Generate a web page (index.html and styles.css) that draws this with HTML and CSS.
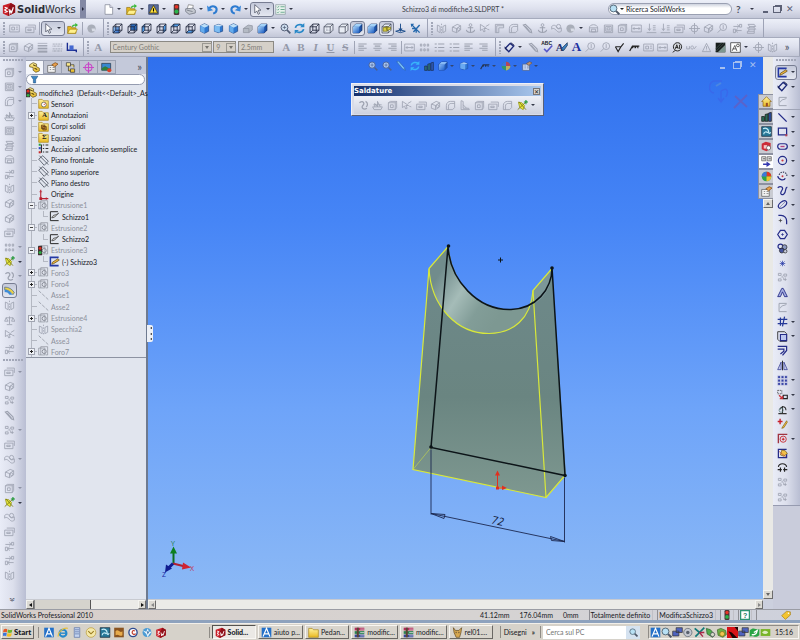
FILE: index.html
```html
<!DOCTYPE html>
<html lang="it">
<head>
    <meta charset="UTF-8">
    <meta name="viewport" content="width=device-width, initial-scale=1.0">
    <title>Schizzo3 di modifiche3.SLDPRT</title>
    <link rel="stylesheet" href="styles.css">
</head>
<body>

<!-- icon library -->
<svg class="defs" aria-hidden="true">
    <linearGradient id="blu" x1="0" y1="0" x2="1" y2="1"><stop offset="0" stop-color="#a8d4fa"/><stop offset="1" stop-color="#1c5cc0"/></linearGradient>
    <linearGradient id="yel" x1="0" y1="0" x2="0" y2="1"><stop offset="0" stop-color="#fff3a0"/><stop offset="1" stop-color="#e8b820"/></linearGradient>
    <symbol id="logo" viewBox="0 0 16 16"><path d="M1 4l9-3 5 3v8l-8 4-6-3z" fill="#c81e28"/><path d="M10 1l5 3v8l-8 4V7z" fill="#8f1018"/><path d="M3 6l3 1-3 2 3 2-3 1M8 8l1 5 1-3 1 2 2-6" fill="none" stroke="#fff" stroke-width="1.3"/></symbol>
    <symbol id="new" viewBox="0 0 16 16"><path d="M3 1h7l4 4v10H3z" fill="#fff" stroke="#7c8290"/><path d="M10 1v4h4" fill="#dde" stroke="#7c8290"/></symbol>
    <symbol id="open" viewBox="0 0 16 16"><path d="M1 5h5l1 2h6v8H1z" fill="#e8b820" stroke="#937414"/><path d="M4 9h11l-3 6H1z" fill="#fff08c" stroke="#a88714"/><path d="M7 5c1-3 3-3 5-3V0l4 3-4 3V4c-2 0-3 0-3 2z" fill="#38b838"/></symbol>
    <symbol id="warn" viewBox="0 0 16 16"><path d="M1 1h14v14H1z" fill="#5a6c9c" stroke="#28365e"/><path d="M8 2l6 11H2z" fill="#ffe03c" stroke="#443800"/><path d="M8 6v4M8 11v1" stroke="#000" stroke-width="1.6"/></symbol>
    <symbol id="traffic" viewBox="0 0 16 16"><rect x="4" y="0" width="8" height="16" rx="2" fill="#4c3534"/><circle cx="8" cy="4" r="2.7" fill="#e83428"/><circle cx="8" cy="11" r="3" fill="#2ab44c"/></symbol>
    <symbol id="print" viewBox="0 0 16 16"><path d="M5 1l7 1-1 6H3z" fill="#fff" stroke="#777"/><path d="M1 7l11-1 3 3v4l-9 2-5-4z" fill="#c4c8d0" stroke="#646a76"/><path d="M3 9l8 2" stroke="#646a76"/></symbol>
    <symbol id="undo" viewBox="0 0 16 16"><path d="M3 6c5-5 11-2 11 2 0 3-2 5-5 6" fill="none" stroke="#2d7bd0" stroke-width="3"/><path d="M0 2l1 9 8-2z" fill="#3988da"/></symbol>
    <symbol id="redo" viewBox="0 0 16 16"><path d="M13 6C8 1 2 4 2 8c0 3 2 5 5 6" fill="none" stroke="#2d7bd0" stroke-width="3"/><path d="M16 2l-1 9-8-2z" fill="#3988da"/></symbol>
    <symbol id="cursor" viewBox="0 0 16 16"><path d="M4 1v12l3-3 2 5 2-1-2-5h4z" fill="#fff" stroke="#3c4254"/></symbol>
    <symbol id="list" viewBox="0 0 16 16"><path d="M1 1h14v14H1z" fill="#e8f3ec" stroke="#8a9aa0"/><path d="M3 4l1 1 2-2M3 8l1 1 2-2M3 12l1 1 2-2M8 4h6M8 8h6M8 12h6" fill="none" stroke="#388c6c"/></symbol>
    <symbol id="glass" viewBox="0 0 16 16"><path d="M10 10l5 5" stroke="#4e5868" stroke-width="3"/><circle cx="6.500" cy="6.500" r="5" fill="#b8e0f4" stroke="#546878" stroke-width="1.400"/></symbol>
    <symbol id="zoomfit" viewBox="0 0 16 16"><path d="M10 10l5 5" stroke="#525c74" stroke-width="2.400"/><circle cx="6.500" cy="6.500" r="5" fill="#cfe0f0" stroke="#525c74" stroke-width="1.400"/><path d="M4 6.500h5M6.500 4v5" stroke="#525c74"/></symbol>
    <symbol id="rot" viewBox="0 0 16 16"><path d="M2 7c1-5 8-6 11-3M14 9c-1 5-8 6-11 3" fill="none" stroke="#2888c8" stroke-width="2.400"/><path d="M15 0v6h-6zM1 16v-6h6z" fill="#2888c8"/></symbol>

    <!-- view cubes -->
    <symbol id="wire" viewBox="0 0 16 16"><path d="M1.500 5.500h9v9h-9zM5.500 1.500h9v9h-9zM1.500 5.500l4-4M10.500 5.500l4-4M1.500 14.500l4-4M10.500 14.500l4-4" fill="none" stroke="#20263a" stroke-width="1.200"/></symbol>
    <symbol id="vfront" viewBox="0 0 16 16"><path d="M1.500 5.500h9v9h-9z" fill="url(#blu)"/><use href="#wire"/></symbol>
    <symbol id="vback" viewBox="0 0 16 16"><path d="M5.500 1.500h9v9h-9z" fill="#2b6ab8"/><use href="#wire"/></symbol>
    <symbol id="vleft" viewBox="0 0 16 16"><path d="M1.500 5.500l4-4v9l-4 4z" fill="#4f9ae4"/><use href="#wire"/></symbol>
    <symbol id="vright" viewBox="0 0 16 16"><path d="M10.500 5.500l4-4v9l-4 4z" fill="#4f9ae4"/><use href="#wire"/></symbol>
    <symbol id="vtop" viewBox="0 0 16 16"><path d="M1.500 5.500l4-4h9l-4 4z" fill="#4f9ae4"/><use href="#wire"/></symbol>
    <symbol id="vbottom" viewBox="0 0 16 16"><path d="M1.500 14.500l4-4h9l-4 4z" fill="#4f9ae4"/><use href="#wire"/></symbol>
    <symbol id="iso" viewBox="0 0 16 16"><path d="M8 1l6 3v8l-6 3-6-3V4z" fill="#2e78d0" stroke="#1c4484"/><path d="M8 1l6 3-6 3-6-3z" fill="#bcdff8"/><path d="M2 4l6 3v8l-6-3z" fill="#66acec"/></symbol>
    <symbol id="iso2" viewBox="0 0 16 16"><path d="M2 4l6-2 6 2v8l-6 2-6-2z" fill="#2e78d0" stroke="#1c4484"/><path d="M2 4l8 1v9l-8-2z" fill="#7cbcf2"/><path d="M2 4l6-2 6 2-4 1z" fill="#cde8fb"/></symbol>
    <symbol id="isog" viewBox="0 0 16 16"><path d="M2 8l7-5 6 1v6l-5 4H2z" fill="#b4bac4" stroke="#8c929e"/><path d="M2 8h8v6" fill="none" stroke="#8c929e"/></symbol>
    <symbol id="solid" viewBox="0 0 16 16"><path d="M1.500 5.500l4-4h9v9l-4 4h-9z" fill="#1c52a8" stroke="#162c5c"/><path d="M1.500 5.500h9v9h-9z" fill="url(#blu)"/><path d="M1.500 5.500l4-4h9l-4 4z" fill="#a4d2f8"/></symbol>
    <symbol id="hid" viewBox="0 0 16 16"><path d="M1.500 5.500l4-4h9v9l-4 4h-9zM1.500 5.500h9v9M10.500 5.500l4-4" fill="#e8ecf4" stroke="#343a4c"/></symbol>
    <symbol id="hidg" viewBox="0 0 16 16"><use href="#hid"/><path d="M5.500 2v8.500h9M5.500 10.500l-4 4" fill="none" stroke="#9298a8" stroke-dasharray="2 1"/></symbol>
    <symbol id="sect" viewBox="0 0 16 16"><use href="#hid"/><path d="M3 7l6-2v7H3zM7 6h7v3l-5 2z" fill="#d8cc40" stroke="#6c6618"/></symbol>
    <symbol id="norm" viewBox="0 0 16 16"><path d="M8 1v10M1 12l7 2 7-2-7-2z" fill="none" stroke="#1e4f8c" stroke-width="1.400"/><path d="M8 13l-3-5h6z" fill="#1e4f8c"/></symbol>
    <symbol id="star" viewBox="0 0 16 16"><path d="M2 2l12 12M14 3L5 13M3 8h6v6" fill="none" stroke="#2468ac" stroke-width="2"/><path d="M1 1h5L2 6z" fill="#2468ac"/></symbol>
    <symbol id="brush" viewBox="0 0 16 16"><path d="M1 1l9 11 5 3-2-5L4 0z" fill="#8cd4f8" stroke="#2c5c94"/></symbol>

    <!-- greyed commands -->
    <symbol id="g-box" viewBox="0 0 16 16"><path d="M2 4l3-2h9v9l-2 3H2zM2 4h10v10M12 4l2-2M5 7h4v4H5z"/></symbol>
    <symbol id="g-cyl" viewBox="0 0 16 16"><path d="M2 6l7-4 5 2v6l-6 4-6-2zM2 6l6 2 6-4M8 8v6"/><circle cx="11" cy="9" r="2"/></symbol>
    <symbol id="g-fillet" viewBox="0 0 16 16"><path d="M2 14V8c0-4 3-6 6-6h6v9l-3 3zM5 14V9c0-3 2-4 4-4h5"/></symbol>
    <symbol id="g-rib" viewBox="0 0 16 16"><path d="M1 10h14l-2 4H3zM4 10V5l4 5V2l4 8M2 7h12"/></symbol>
    <symbol id="g-shell" viewBox="0 0 16 16"><path d="M2 3h12v11H2zM4 5h8v7H4zM6 7h4v3H6z"/></symbol>
    <symbol id="g-stack" viewBox="0 0 16 16"><path d="M3 2h9l2 3H5zM2 7h10l2 2H4zM2 12h10v3H2zM5 5v2M12 5v2M4 9v3M12 9v3"/></symbol>
    <symbol id="g-dome" viewBox="0 0 16 16"><path d="M2 7c0-6 12-6 12 0v6H2zM2 7h12M5 9h6v4H5z"/></symbol>
    <symbol id="g-swap" viewBox="0 0 16 16"><path d="M2 5h8l-2-3M10 5L8 7M14 11H6l2-3M6 11l2 3M11 2h3v4h-3zM2 9h3v5H2z"/></symbol>
    <symbol id="g-mir" viewBox="0 0 16 16"><path d="M2 3l4 2v9l-4-2zM14 3l-4 2v9l4-2zM8 1v2M8 5v2M8 9v2M8 13v2"/></symbol>
    <symbol id="g-pat" viewBox="0 0 16 16"><path d="M2 3h2v3H2zM7 3h2v3H7zM12 3h2v3h-2zM2 10h2v3H2zM7 10h2v3H7zM12 10h2v3h-2z"/></symbol>
    <symbol id="g-curve" viewBox="0 0 16 16"><path d="M2 4c6-4 8 1 5 4s1 7 6 4M11 2c4 2 3 6 1 8" stroke-width="1.800"/></symbol>
    <symbol id="g-bal" viewBox="0 0 16 16"><path d="M8 2v11M3 4h10M3 4l-2 5h5L3 4M13 4l-2 5h5l-3-5M4 14h8"/></symbol>
    <symbol id="g-arrow" viewBox="0 0 16 16"><path d="M2 2v9l3-2 2 4 2-1-2-4h4zM10 5l5-3M12 9l3 1"/></symbol>
    <symbol id="g-dots" viewBox="0 0 16 16"><path d="M2 2h4v3H2zM10 3h4v3h-4zM2 10h4v3H2zM9 11h5M8 7l2 3M6 8l3-3M12 8v5"/></symbol>
    <symbol id="g-pencil" viewBox="0 0 16 16"><path d="M2 3l9 10 3 1-1-4L5 2zM5 5l6 7" stroke-width="1.600"/></symbol>
    <symbol id="g-pipe" viewBox="0 0 16 16"><path d="M1 5c4-4 7 0 8 2s3 2 6 0v5c-4 3-6 0-8-2S3 7 1 9z"/><circle cx="11" cy="5" r="3"/></symbol>
    <symbol id="g-blob" viewBox="0 0 16 16"><circle cx="8" cy="8" r="6" fill="#a9aeb9"/><path d="M8 8h5v4H9z" fill="#d8dce6"/></symbol>
    <symbol id="g-anchor" viewBox="0 0 16 16"><circle cx="8" cy="3" r="2"/><path d="M8 5v9M4 7h8M2 10c1 5 11 5 12 0" stroke-width="1.600"/></symbol>
    <symbol id="g-plate" viewBox="0 0 16 16"><path d="M1 6h12v8H1zM4 3h11v7M4 9h5v2H4z"/></symbol>
    <symbol id="g-down" viewBox="0 0 16 16"><path d="M1 14h14M5 1v9M3 8l2 3 2-3M10 4h4M10 7h4M10 10h4"/></symbol>
    <symbol id="g-corner" viewBox="0 0 16 16"><path d="M2 14V2h12v5H7v7zM4 14V4h10"/></symbol>
    <symbol id="g-tri" viewBox="0 0 16 16"><path d="M8 2l6 12H2zM8 6v4M8 11v1"/></symbol>
    <symbol id="g-angle" viewBox="0 0 16 16"><path d="M3 1v13h12l-1-2H6V2zM6 7l5 5"/></symbol>
    <symbol id="g-ball" viewBox="0 0 16 16"><circle cx="9" cy="6" r="5"/><path d="M9 3v6M5 10l-4 4"/></symbol>
    <symbol id="g-tag" viewBox="0 0 16 16"><path d="M1 3h14v10H1zM4 6h4v4H4zM10 6h3M10 9h3"/></symbol>
    <symbol id="g-slot" viewBox="0 0 16 16"><path d="M1 6v4h4V6M7 8c0-3 4-3 4 0s-4 3-4 0M12 10l3-4"/></symbol>
    <symbol id="g-target" viewBox="0 0 16 16"><circle cx="8" cy="8" r="5"/><path d="M8 0v16M0 8h16"/></symbol>
    <symbol id="g-left" viewBox="0 0 16 16"><path d="M2 3h12M2 6h8M2 9h12M2 12h8" stroke-width="1.600"/></symbol>
    <symbol id="g-mid" viewBox="0 0 16 16"><path d="M2 3h12M4 6h8M2 9h12M4 12h8" stroke-width="1.600"/></symbol>
    <symbol id="g-right" viewBox="0 0 16 16"><path d="M2 3h12M6 6h8M2 9h12M6 12h8" stroke-width="1.600"/></symbol>
    <symbol id="g-bul" viewBox="0 0 16 16"><path d="M1 3h3M1 8h3M1 13h3M6 3h9M6 8h9M6 13h9" stroke-width="1.600"/></symbol>
    <symbol id="g-fit" viewBox="0 0 16 16"><path d="M1 3h14v10H1zM3 8h10M5 6L3 8l2 2M11 6l2 2-2 2"/></symbol>
    <symbol id="g-lines" viewBox="0 0 16 16"><path d="M1 2h14" stroke-width="1"/><path d="M1 5.500h14" stroke-width="2"/><path d="M1 9.500h14" stroke-width="2.500"/><path d="M1 14h14" stroke-width="3"/></symbol>
    <symbol id="g-dash" viewBox="0 0 16 16"><path d="M1 3h14M1 10h14" stroke-dasharray="3 1"/><path d="M1 6h14M1 13h14" stroke-dasharray="1 1" stroke-width="2"/></symbol>
    <symbol id="g-sk" viewBox="0 0 16 16"><path d="M14 2H3v12h11M5 9c1-5 6-3 9-6" stroke-width="1.400"/></symbol>

    <!-- coloured commands -->
    <symbol id="edgec" viewBox="0 0 16 16"><path d="M2 1v11h13v3" fill="none" stroke="#1a2c90" stroke-width="2"/><path d="M5 5h6v7H5z" fill="#4468d0"/></symbol>
    <symbol id="dim" viewBox="0 0 16 16"><path d="M2 9l7-7 5 4-7 8z" fill="none" stroke="#1c2878" stroke-width="2"/><path d="M1 7l3 5M10 1l5 4" stroke="#101848" stroke-width="1.300"/></symbol>
    <symbol id="check" viewBox="0 0 16 16"><path d="M3 10l4 4 8-9" fill="none" stroke="#5858c8" stroke-width="2.200"/></symbol>
    <symbol id="fmt" viewBox="0 0 16 16"><path d="M15 1L7 9v3h3l5-7z" fill="#3c80c0" stroke="#1c3454"/></symbol>
    <symbol id="rough" viewBox="0 0 16 16"><path d="M2 7h8L6 14 2 7M10 7l4-5M6 14" fill="none" stroke="#222" stroke-width="1.600"/></symbol>
    <symbol id="weld" viewBox="0 0 16 16"><path d="M1 13L5 6h10M5 9c1-4 4-4 4 0 1-4 4-4 4 0" fill="none" stroke="#222" stroke-width="1.800"/></symbol>
    <symbol id="datum" viewBox="0 0 16 16"><circle cx="8" cy="7" r="6" fill="#d7dae0" stroke="#222" stroke-width="1.400"/><path d="M5 10l2-6 2 6M5 8h4M11 4v6M5 12l-4 3" fill="none" stroke="#222" stroke-width="1.300"/></symbol>
    <symbol id="hatch" viewBox="0 0 16 16"><path d="M1 1h14v14H1z" fill="#171c1c"/><path d="M4 15L15 4v11z" fill="#7d9690"/><path d="M1 10l9-9M1 14L14 1" stroke="#47605a"/></symbol>
    <symbol id="block" viewBox="0 0 16 16"><path d="M1 1h14v14H1z" fill="#fff" stroke="#222"/><path d="M3 13l4-8 3 8M4 10h5" fill="none" stroke="#222"/><circle cx="11.500" cy="5" r="2" fill="none" stroke="#222"/></symbol>
    <symbol id="refgeo" viewBox="0 0 16 16"><path d="M2 3l5 1 4 4-2 6-5-3z" fill="#e8e83c" stroke="#8c8c10"/><path d="M1 14L14 2M3 3l10 11" stroke="#7c7c14" stroke-width="1.300"/><path d="M13 0v6M10 3h6" stroke="#1a9838" stroke-width="1.600"/></symbol>
    <symbol id="inst3d" viewBox="0 0 16 16"><path d="M1 3c6 0 11 3 14 8l-2 3C9 9 5 7 1 7z" fill="#e9d24a" stroke="#47658c"/><path d="M1 7c5 0 8 3 11 7H8C6 11 4 10 1 10z" fill="#3c8cd8"/></symbol>
    <symbol id="sketch" viewBox="0 0 16 16"><path d="M14 2H2v12h12" fill="none" stroke="#2438a4" stroke-width="2.200"/><path d="M5 9l8-5 2 2-8 5-3 1z" fill="#f0b83c" stroke="#564018"/></symbol>
    <symbol id="line" viewBox="0 0 16 16"><path d="M2 2l12 12" stroke="#252c88" stroke-width="2"/></symbol>
    <symbol id="rect" viewBox="0 0 16 16"><path d="M2 3h12v10H2z" class="ink"/><path d="M12 12h3v3h-3z" fill="#b44454"/></symbol>
    <symbol id="slot" viewBox="0 0 16 16"><rect x="1" y="4" width="14" height="8" rx="4" class="ink"/><path d="M5 8h6" stroke="#b44480" stroke-width="2"/></symbol>
    <symbol id="circ" viewBox="0 0 16 16"><circle cx="8" cy="8" r="6" class="ink"/><circle cx="8" cy="8" r="1.600" fill="#c8343c"/></symbol>
    <symbol id="arc" viewBox="0 0 16 16"><path d="M3 7c3-7 13-4 11 3" fill="none" stroke="#303450" stroke-width="1.700" stroke-dasharray="2 1.500"/><path d="M1 9c2 7 10 6 11 3" class="ink"/><circle cx="8" cy="9" r="1.400" fill="#c8343c"/></symbol>
    <symbol id="spline" viewBox="0 0 16 16"><path d="M1 4c5-4 9 0 6 4s-1 8 3 5 1-9 5-10" class="ink"/></symbol>
    <symbol id="ell" viewBox="0 0 16 16"><ellipse cx="8" cy="8" rx="7" ry="4" transform="rotate(-40 8 8)" class="ink"/><path d="M4 12l8-8" stroke="#777ba4"/></symbol>
    <symbol id="filletc" viewBox="0 0 16 16"><path d="M2 2h4c5 0 8 4 8 8v5" class="ink"/><path d="M5 7v5M2.500 9.500h5" stroke="#333"/></symbol>
    <symbol id="poly" viewBox="0 0 16 16"><path d="M5 2h6l4 6-4 6H5L1 8z" class="ink"/><path d="M6 8h4M8 6v4" stroke="#252c88"/></symbol>
    <symbol id="balls" viewBox="0 0 16 16"><circle cx="5" cy="5" r="3.500" class="ink"/><circle cx="11" cy="6" r="3.500" fill="#8c98c0" stroke="#222"/><circle cx="7" cy="11" r="3.500" fill="#4654a0" stroke="#222"/><circle cx="12" cy="12" r="2.500" fill="#c8cce0" stroke="#222"/></symbol>
    <symbol id="pt" viewBox="0 0 16 16"><path d="M8 4v8M4 8h8M5 5l6 6M11 5l-6 6" stroke="#2438a4"/></symbol>
    <symbol id="txt" viewBox="0 0 16 16"><path d="M1 14L7 2h2l6 12h-4l-3-7-3 7z" fill="#a8b0e0" stroke="#252c88" stroke-width="1.300"/></symbol>
    <symbol id="trim" viewBox="0 0 16 16"><path d="M1 5h14M1 11h14M5 2v12M11 1L8 15" stroke="#243898" stroke-width="1.800"/></symbol>
    <symbol id="conv" viewBox="0 0 16 16"><path d="M1 1h10l3 3v11H4l-3-3z" fill="#dfe3f2" stroke="#333" stroke-width="1.300"/><path d="M5 5h9v9H5z" fill="#bcc6f0" stroke="#252c88" stroke-width="1.600"/></symbol>
    <symbol id="off" viewBox="0 0 16 16"><path d="M1 2h13v6l-6 7M1 6h9v3l-5 4" class="ink"/></symbol>
    <symbol id="mirr" viewBox="0 0 16 16"><path d="M6 3L1 14h5zM10 3l5 11h-5z" fill="#c6ccec" stroke="#252c88"/><path d="M8 1v14" stroke="#222" stroke-width="1.400"/></symbol>
    <symbol id="patt" viewBox="0 0 16 16"><path d="M1 1h4v4H1zM6 1h4v4H6zM11 1h4v4h-4zM1 6h4v4H1zM6 6h4v4H6zM11 6h4v4h-4zM1 11h4v4H1zM6 11h4v4H6zM11 11h4v4h-4z" fill="#3440a4" stroke="#dfe2ee" stroke-width=".8"/></symbol>
    <symbol id="move" viewBox="0 0 16 16"><path d="M1 2h6v5H1z" fill="none" stroke="#333" stroke-dasharray="2 1"/><path d="M9 9h6v5H9z" fill="none" stroke="#222" stroke-width="1.600"/><path d="M3 9l5 5M8 10v4H4" stroke="#c8343c" stroke-width="2" fill="none"/></symbol>
    <symbol id="rel" viewBox="0 0 16 16"><path d="M2 14h12M8 3v11M4 8c3-7 9-4 9 1" fill="none" stroke="#333" stroke-width="1.500"/><circle cx="6" cy="9" r="3" fill="none" stroke="#577"/></symbol>
    <symbol id="fix" viewBox="0 0 16 16"><path d="M1 5h7M4.500 1v8" stroke="#c81e28" stroke-width="2"/><path d="M14 4l-6 9-1 2 3-1 5-8z" fill="#f2c040" stroke="#806018"/></symbol>
    <symbol id="snap" viewBox="0 0 16 16"><path d="M2 15V2h13" fill="none" stroke="#a03440" stroke-width="2"/><circle cx="9" cy="9" r="4.500" fill="none" stroke="#c8343c" stroke-width="1.400"/><path d="M9 7v4M7 9h4" stroke="#c81e28" stroke-width="1.500"/></symbol>
    <symbol id="rapid" viewBox="0 0 16 16"><path d="M2 1v13h12V8M2 2h12" class="ink"/><path d="M7 3l5 1 3 4-5 4-5-2z" fill="#f0c048" stroke="#705418"/><path d="M3 5l10 8" stroke="#c84c38"/></symbol>
    <symbol id="conn" viewBox="0 0 16 16"><path d="M2 7c1-6 11-6 12 0M1 11h6M9 11h6M5 8v6M11 8v6" fill="none" stroke="#222" stroke-width="1.700"/></symbol>

    <!-- feature tree -->
    <symbol id="part" viewBox="0 0 16 16"><path d="M1 4l5-3 5 2v4l4 2v4l-5 2-4-3V8L1 7z" fill="url(#yel)" stroke="#5c4810"/><path d="M6 4l4 2M8 9l4 2" stroke="#5c4810" stroke-width="1.600"/></symbol>
    <symbol id="root" viewBox="0 0 16 16"><use href="#part"/><rect x="0" y="3" width="6" height="12" rx="1" fill="#403030"/><circle cx="3" cy="6" r="2" fill="#e02c20"/><circle cx="3" cy="12" r="2" fill="#2cae44"/></symbol>
    <symbol id="fold" viewBox="0 0 16 16"><path d="M1 2h5l2 2h7v11H1z" fill="url(#yel)" stroke="#a8841c"/></symbol>
    <symbol id="f-sens" viewBox="0 0 16 16"><use href="#fold"/><circle cx="8.500" cy="9.500" r="3.500" fill="#fff" stroke="#555"/><path d="M8.500 10l2-2" stroke="#c22" stroke-width="1.400"/></symbol>
    <symbol id="f-body" viewBox="0 0 16 16"><use href="#fold"/><path d="M5 6h5v5H5zM7 8h5v5H7z" fill="#c88c38" stroke="#553410"/></symbol>
    <symbol id="mat" viewBox="0 0 16 16"><path d="M1 1h3v3H1z" fill="#28a040"/><path d="M1 6h3v3H1z" fill="#2848c0"/><path d="M1 12h3v3H1z" fill="#c82828"/><path d="M5 2v12M7 3h2M11 3h4M7 8h2M11 8h4M7 13h2M11 13h4" stroke="#333" stroke-width="1.600"/></symbol>
    <symbol id="plane" viewBox="0 0 16 16"><path d="M1 6l6-5 8 8-6 6zM2 1l13 13" fill="none" stroke="#4d5360" stroke-width="1.200"/></symbol>
    <symbol id="orig" viewBox="0 0 16 16"><path d="M4 1v13h11" fill="none" stroke="#b82030" stroke-width="1.600"/><path d="M2 4h4M12 12v4" stroke="#b82030"/><path d="M2 12h4v4H2z" fill="#b82030"/></symbol>
    <symbol id="skt" viewBox="0 0 16 16"><path d="M13 1H2v13h12" fill="none" stroke="#222" stroke-width="1.400"/><path d="M4 10c2-6 6-3 10-7L8 9z" fill="#ccc" stroke="#333"/></symbol>
    <symbol id="axis" viewBox="0 0 16 16"><path d="M1 1l14 13" stroke="#858994" stroke-dasharray="5 2"/></symbol>
    <symbol id="feat" viewBox="0 0 16 16"><path d="M1 3h9v10H1zM4 1h10v12h-3M4 1v12" fill="none" stroke="#8b8f99"/><circle cx="9" cy="8" r="3" fill="none" stroke="#8b8f99" stroke-width="1.400"/></symbol>
    <symbol id="featr" viewBox="0 0 16 16"><use href="#feat"/><rect x="0" y="1" width="6" height="14" rx="1" fill="#403030"/><circle cx="3" cy="5" r="2" fill="#e02c20"/><circle cx="3" cy="11" r="2.200" fill="#2cae44"/></symbol>
    <symbol id="funnel" viewBox="0 0 16 16"><path d="M2 2h12l-4 6v6H6V8z" fill="#3c88c4" stroke="#1c4c80"/></symbol>
    <symbol id="props" viewBox="0 0 16 16"><path d="M1 5h11v10H1z" fill="#f4f4f4" stroke="#555"/><path d="M4 8h2M8 8h3M4 11h2M8 11h3" stroke="#666"/><path d="M7 4l5-3 4 2-5 4z" fill="#e8a04c" stroke="#80480c"/></symbol>
    <symbol id="config" viewBox="0 0 16 16"><path d="M2 1h6v5H2zM8 4h5v4M5 6v7h3M8 10h6v5H8z" fill="url(#yel)" stroke="#333"/></symbol>
    <symbol id="dimx" viewBox="0 0 16 16"><circle cx="8" cy="8" r="5" fill="none" stroke="#c848c8" stroke-width="1.600"/><path d="M8 0v16M0 8h16" stroke="#c848c8" stroke-width="1.600"/></symbol>
    <symbol id="disp" viewBox="0 0 16 16"><path d="M1 2h13v10H1z" fill="#3888d0" stroke="#234"/><path d="M1 9l5-3 8 4v2H1z" fill="#30803c"/><circle cx="12" cy="12" r="3" fill="#d8402c"/></symbol>

    <!-- task pane and desktop -->
    <symbol id="home" viewBox="0 0 16 16"><path d="M1 8l7-7 7 7h-2v7H3V8z" fill="url(#yel)" stroke="#906414"/><path d="M7 10h3v5H7z" fill="#9c4c20"/></symbol>
    <symbol id="books" viewBox="0 0 16 16"><path d="M1 8h4v7H1zM6 5l4-1v11H6z" fill="#2c6c54" stroke="#111"/><path d="M11 3l4-1v13h-4z" fill="#2d50a0" stroke="#111"/></symbol>
    <symbol id="expl" viewBox="0 0 16 16"><path d="M1 1h14v14H1z" fill="#287898" stroke="#123"/><path d="M3 4c4-2 8 0 8 4s2 3 3 1M4 12c0-4 4-4 6-2" fill="none" stroke="#c6ecf8" stroke-width="1.800"/></symbol>
    <symbol id="redbox" viewBox="0 0 16 16"><path d="M1 4l6-3 7 2v8l-6 4-7-3z" fill="#cc2c38"/><path d="M4 6h5v5H4z" fill="#f8c4c4"/><circle cx="11" cy="10" r="3" fill="#fff" stroke="#555"/></symbol>
    <symbol id="pal" viewBox="0 0 16 16"><path d="M1 1h6v6H1zM9 1h6v6H9z" fill="#ddd" stroke="#555"/><path d="M3 4h3M11 4h3" stroke="#333"/><path d="M3 11h5V8l6 4-6 4v-3H3z" fill="#3438b0"/></symbol>
    <symbol id="pie" viewBox="0 0 16 16"><circle cx="8" cy="8" r="7" fill="#2ca448"/><path d="M8 8V1a7 7 0 0 1 7 7z" fill="#e03828"/><path d="M8 8H1a7 7 0 0 1 7-7z" fill="#3c78dc"/><path d="M8 8h7a7 7 0 0 1-7 7z" fill="#ecc430"/></symbol>
    <symbol id="win" viewBox="0 0 16 16"><path d="M1 3c3-2 5-1 6 0L6 8c-2-1-3-1-6 0z" fill="#e85a28"/><path d="M8 3c3 2 5 1 7 0l-1 5c-3 1-4 1-7 0z" fill="#6cb42c"/><path d="M0 9c3-1 4-1 6 0l-1 5c-2-1-3-1-6 0z" fill="#3c74d8"/><path d="M7 9c3 1 4 1 7 0l-1 5c-3 1-4 1-7 0z" fill="#f4c020"/></symbol>
    <symbol id="blueA" viewBox="0 0 16 16"><path d="M1 1h14v14H1z" fill="#2470c8"/><path d="M3 14L8 2l5 12M5 10h7" fill="none" stroke="#fff" stroke-width="1.800"/></symbol>
    <symbol id="ie" viewBox="0 0 16 16"><circle cx="8" cy="9" r="5" fill="none" stroke="#2488cc" stroke-width="3"/><path d="M4 9h9" stroke="#2488cc" stroke-width="2"/><path d="M1 14C0 8 9 0 15 2" fill="none" stroke="#e6c040" stroke-width="1.600"/></symbol>
    <symbol id="bird" viewBox="0 0 16 16"><circle cx="8" cy="8" r="6.500" fill="#4c9cd4"/><path d="M2 5l5 2 2-5 2 5 4 0-4 4-2 4-2-5z" fill="#e8f4fc"/><path d="M8 6l3 1-2 4z" fill="#1c5c9c"/></symbol>
    <symbol id="srv" viewBox="0 0 16 16"><path d="M4 1h8v14H4z" fill="#c4d4f0" stroke="#5870a4"/><path d="M5 4h6M5 7h6M5 10h6" stroke="#5870a4"/></symbol>
    <symbol id="mail" viewBox="0 0 16 16"><circle cx="8" cy="8" r="7" fill="#f4e8a8" stroke="#ba9a38"/><path d="M4 6l4 4 4-4" fill="none" stroke="#98781c" stroke-width="1.500"/></symbol>
    <symbol id="app" viewBox="0 0 16 16"><path d="M1 1h14v14H1z" fill="#8a5420"/><path d="M3 6c4-4 6 4 10 0v6c-4 3-6-3-10 0z" fill="#e8ac4c"/></symbol>
    <symbol id="cc" viewBox="0 0 16 16"><circle cx="8" cy="8" r="6" fill="#fff" stroke="#304c90" stroke-width="2"/><path d="M11 6c-4-3-6 3-2 5l3-1" fill="none" stroke="#c04030" stroke-width="1.600"/></symbol>
    <symbol id="rar" viewBox="0 0 16 16"><path d="M1 1h14v4H1z" fill="#b42c5c"/><path d="M1 6h14v4H1z" fill="#2c8454"/><path d="M1 11h14v4H1z" fill="#3448a0"/><path d="M4 1h3v14H4z" fill="#5c4434"/><path d="M9 3h6M9 8h6M9 13h6" stroke="#e4e4e4"/></symbol>
    <symbol id="dog" viewBox="0 0 16 16"><path d="M2 1l3 4h5l4-4-1 7-2 7H6L3 8z" fill="#d8a850" stroke="#60481c"/><path d="M6 7v2M10 7v2" stroke="#222"/></symbol>
    <symbol id="pcs" viewBox="0 0 16 16"><path d="M6 1h9v7H6zM1 6h9v7H1z" fill="#5064c0" stroke="#333"/></symbol>
    <symbol id="vol" viewBox="0 0 16 16"><circle cx="7" cy="8" r="6" fill="#c4c8d0" stroke="#58606c"/><circle cx="7" cy="8" r="2.500" fill="#58606c"/></symbol>
    <symbol id="burst" viewBox="0 0 16 16"><path d="M8 8L1 2M8 8L2 14M8 8l7-7" stroke="#107878" stroke-width="2.500"/><path d="M8 8h7M8 8l5 6" stroke="#a82848" stroke-width="2"/></symbol>
    <symbol id="green" viewBox="0 0 16 16"><path d="M2 2l6 2 6 7-3 4-8-5z" fill="#50ac4c" stroke="#286028"/><circle cx="11" cy="11" r="3" fill="#d4dcc8" stroke="#445"/></symbol>
    <symbol id="chat" viewBox="0 0 16 16"><path d="M2 4l5-2 7 3 1 6-5 4-7-3z" fill="#6cb048" stroke="#3c6820"/><circle cx="9" cy="10" r="3.500" fill="#f0c850" stroke="#8a6a18"/></symbol>
    <symbol id="redsq" viewBox="0 0 16 16"><path d="M0 0h16v16H0z" fill="#d81418"/><path d="M2 6l5 2 8 8H8zM11 0h5v6z" fill="#200404"/></symbol>
    <symbol id="msn" viewBox="0 0 16 16"><path d="M1 5c6-6 9 0 14-2v9c-6 5-8 0-14 2z" fill="#28a444"/><path d="M4 11c6 1 7-2 8-6l-5 3" fill="none" stroke="#fff" stroke-width="2"/></symbol>
    <symbol id="nv" viewBox="0 0 16 16"><path d="M1 3h14v10H1z" fill="#78b428"/><path d="M3 8c3-4 7-3 9 0-3 3-6 3-9 0z" fill="#dcecc0"/></symbol>
    <symbol id="tag" viewBox="0 0 16 16"><path d="M1 9l8-7 6 1v5l-8 7z" fill="#f4c430" stroke="#a47c10"/><circle cx="12" cy="5" r="1.200" fill="#fff"/></symbol>
    <symbol id="help" viewBox="0 0 16 16"><path d="M1 1h14v14H1z" fill="#fff" stroke="#2c9470" stroke-width="2"/></symbol>
</svg>

<div class="app">
    <header class="bar titlebar">
        <div class="brand"><svg><use href="#logo"/></svg><b>Solid</b>Works</div>
        <button class="flyout" title="Menu"></button>
        <div class="group g-file">
            <button class="b dd" title="Nuovo"><svg><use href="#new"/></svg></button>
            <button class="b dd" title="Apri"><svg><use href="#open"/></svg></button>
            <button class="b dd" title="Salva"><svg><use href="#warn"/></svg></button>
            <button class="b" title="Ricostruisci"><svg><use href="#traffic"/></svg></button>
            <button class="b dd" title="Stampa"><svg><use href="#print"/></svg></button>
            <button class="b dd" title="Annulla"><svg><use href="#undo"/></svg></button>
            <button class="b dd" title="Ripristina"><svg><use href="#redo"/></svg></button>
            <button class="b dd on" title="Seleziona"><svg><use href="#cursor"/></svg></button>
            <button class="b dd" title="Opzioni"><svg><use href="#list"/></svg></button>
        </div>
        <h1 class="doc">Schizzo3 di modifiche3.SLDPRT *</h1>
        <label class="find"><svg><use href="#glass"/></svg><input type="text" value="Ricerca SolidWorks" aria-label="Ricerca SolidWorks"></label>
        <div class="group g-win">
            <button class="b dd glyph" title="Guida">?</button>
            <button class="w min" title="Riduci"></button>
            <button class="w max" title="Ripristina"></button>
            <button class="w cls" title="Chiudi">✕</button>
        </div>
    </header>

    <div class="bar">
        <div class="group g-sel">
            <i class="grip"></i>
            <button class="b"><svg class="g"><use href="#g-tag"/></svg></button>
            <button class="b"><svg class="g"><use href="#g-plate"/></svg></button>
            <i class="sep"></i>
            <button class="b dd on" title="Seleziona"><svg><use href="#cursor"/></svg></button>
            <button class="b" title="Apri"><svg><use href="#open"/></svg></button>
            <i class="sep"></i>
            <button class="b"><svg><use href="#g-blob"/></svg></button>
        </div>
        <div class="group g-view">
            <i class="grip"></i>
            <button class="b" title="Frontale"><svg><use href="#vfront"/></svg></button>
            <button class="b" title="Posteriore"><svg><use href="#vback"/></svg></button>
            <button class="b" title="Sinistra"><svg><use href="#vleft"/></svg></button>
            <button class="b" title="Destra"><svg><use href="#vright"/></svg></button>
            <button class="b" title="Superiore"><svg><use href="#vtop"/></svg></button>
            <button class="b" title="Inferiore"><svg><use href="#vbottom"/></svg></button>
            <button class="b" title="Isometrica"><svg><use href="#iso"/></svg></button>
            <button class="b" title="Trimetrica"><svg><use href="#iso2"/></svg></button>
            <button class="b" title="Dimetrica"><svg><use href="#iso"/></svg></button>
            <button class="b"><svg><use href="#isog"/></svg></button>
            <button class="b dd"><svg><use href="#solid"/></svg></button>
            <button class="b" title="Zoom"><svg><use href="#zoomfit"/></svg></button>
            <button class="b" title="Ruota"><svg><use href="#rot"/></svg></button>
            <button class="b"><svg><use href="#wire"/></svg></button>
            <button class="b"><svg><use href="#hidg"/></svg></button>
            <button class="b"><svg><use href="#hid"/></svg></button>
            <button class="b on"><svg><use href="#solid"/></svg></button>
            <button class="b"><svg><use href="#solid"/></svg></button>
            <button class="b on"><svg><use href="#sect"/></svg></button>
            <button class="b"><svg><use href="#norm"/></svg></button>
            <button class="b"><svg><use href="#star"/></svg></button>
        </div>
        <div class="group g-sheet">
            <i class="grip"></i>
            <button class="b"><svg class="g"><use href="#g-mir"/></svg></button>
            <button class="b"><svg class="g"><use href="#g-cyl"/></svg></button>
            <button class="b"><svg class="g"><use href="#g-anchor"/></svg></button>
            <button class="b"><svg class="g"><use href="#g-arrow"/></svg></button>
            <button class="b"><svg class="g"><use href="#g-corner"/></svg></button>
            <button class="b"><svg class="g"><use href="#g-fillet"/></svg></button>
            <button class="b"><svg class="g"><use href="#g-pencil"/></svg></button>
            <button class="b"><svg class="g"><use href="#g-anchor"/></svg></button>
            <button class="b"><svg class="g"><use href="#g-pipe"/></svg></button>
            <button class="b dd"><svg><use href="#g-blob"/></svg></button>
            <button class="b"><svg class="g"><use href="#g-dome"/></svg></button>
            <button class="b"><svg class="g"><use href="#g-shell"/></svg></button>
            <button class="b"><svg class="g"><use href="#g-box"/></svg></button>
            <button class="b"><svg class="g"><use href="#g-fit"/></svg></button>
            <button class="b"><svg class="g"><use href="#g-down"/></svg></button>
            <button class="b"><svg class="g"><use href="#g-down"/></svg></button>
            <button class="b"><svg class="g"><use href="#g-plate"/></svg></button>
            <button class="b"><svg class="g"><use href="#g-target"/></svg></button>
            <button class="b"><svg class="g"><use href="#g-cyl"/></svg></button>
            <button class="b"><svg class="g"><use href="#g-ball"/></svg></button>
            <button class="b"><svg class="g"><use href="#g-swap"/></svg></button>
            <button class="b"><svg class="g"><use href="#g-stack"/></svg></button>
        </div>
    </div>

    <div class="bar">
        <div class="group g-line">
            <i class="grip"></i>
            <button class="b"><svg class="g"><use href="#g-box"/></svg></button>
            <button class="b"><svg class="g"><use href="#g-cyl"/></svg></button>
            <button class="b"><svg class="g"><use href="#g-lines"/></svg></button>
            <button class="b"><svg class="g"><use href="#g-dash"/></svg></button>
            <button class="b"><svg><use href="#edgec"/></svg></button>
        </div>
        <div class="group g-text">
            <i class="grip"></i>
            <button class="b letter">A</button>
            <span class="combo face"><select aria-label="Carattere"><option>Century Gothic</option></select></span>
            <span class="combo size"><select aria-label="Dimensione"><option>9</option></select></span>
            <input class="height" type="text" value="2.5mm" aria-label="Altezza">
            <button class="b letter">A</button>
            <button class="b letter">B</button>
            <button class="b letter"><i>I</i></button>
            <button class="b letter"><u>U</u></button>
            <button class="b letter"><s>S</s></button>
            <i class="sep"></i>
            <button class="b"><svg class="g"><use href="#g-left"/></svg></button>
            <button class="b"><svg class="g"><use href="#g-mid"/></svg></button>
            <button class="b"><svg class="g"><use href="#g-right"/></svg></button>
            <i class="sep"></i>
            <button class="b"><svg class="g"><use href="#g-fit"/></svg></button>
            <button class="b"><svg class="g"><use href="#g-pat"/></svg></button>
            <button class="b"><svg class="g"><use href="#g-bul"/></svg></button>
            <button class="b"><svg class="g"><use href="#g-bul"/></svg></button>
            <button class="b"><svg class="g"><use href="#g-left"/></svg></button>
            <button class="b"><svg class="g"><use href="#g-right"/></svg></button>
        </div>
        <div class="group g-note">
            <i class="grip"></i>
            <button class="b dd" title="Quota"><svg><use href="#dim"/></svg></button>
            <button class="b"><svg class="g"><use href="#g-pencil"/></svg></button>
            <button class="b" title="Ortografia"><svg><use href="#check"/></svg><span class="stamp abc">ABC</span></button>
            <button class="b"><span class="stamp big">A</span><svg><use href="#fmt"/></svg></button>
            <button class="b letter blue" title="Nota">A</button>
            <button class="b"><svg class="g"><use href="#g-ball"/></svg></button>
            <button class="b"><svg class="g"><use href="#g-ball"/></svg></button>
            <button class="b"><svg><use href="#rough"/></svg></button>
            <button class="b"><svg><use href="#weld"/></svg></button>
            <button class="b"><svg class="g"><use href="#g-tag"/></svg></button>
            <button class="b"><svg class="g"><use href="#g-fit"/></svg></button>
            <button class="b"><svg><use href="#datum"/></svg></button>
            <button class="b"><svg class="g"><use href="#g-slot"/></svg></button>
            <button class="b"><svg class="g"><use href="#g-tri"/></svg></button>
            <button class="b"><svg><use href="#hatch"/></svg></button>
            <button class="b dd"><svg><use href="#block"/></svg></button>
            <button class="b"><svg class="g"><use href="#g-target"/></svg></button>
            <button class="b"><svg class="g"><use href="#g-mir"/></svg></button>
            <button class="b glyph more">»</button>
        </div>
    </div>

    <main class="work">
        <nav class="side left">
            <i class="hgrip"></i>
            <div class="stack s20">
                <button class="b dd"><svg class="g"><use href="#g-box"/></svg></button>
                <button class="b dd"><svg class="g"><use href="#g-shell"/></svg></button>
                <button class="b dd"><svg class="g"><use href="#g-fillet"/></svg></button>
                <button class="b"><svg class="g"><use href="#g-rib"/></svg></button>
                <button class="b"><svg class="g"><use href="#g-shell"/></svg></button>
                <button class="b"><svg class="g"><use href="#g-stack"/></svg></button>
                <button class="b"><svg class="g"><use href="#g-dome"/></svg></button>
                <button class="b"><svg class="g"><use href="#g-swap"/></svg></button>
                <button class="b"><svg class="g"><use href="#g-mir"/></svg></button>
                <button class="b"><svg class="g"><use href="#g-cyl"/></svg></button>
                <button class="b"><svg class="g"><use href="#g-cyl"/></svg></button>
                <button class="b"><svg class="g"><use href="#g-plate"/></svg></button>
                <button class="b dd"><svg class="g"><use href="#g-pat"/></svg></button>
                <button class="b dd"><svg><use href="#refgeo"/></svg></button>
                <button class="b dd"><svg class="g"><use href="#g-curve"/></svg></button>
                <button class="b on" title="Instant3D"><svg><use href="#inst3d"/></svg></button>
                <button class="b"><svg class="g"><use href="#g-mir"/></svg></button>
                <button class="b"><svg class="g"><use href="#g-bal"/></svg></button>
                <button class="b"><svg class="g"><use href="#g-arrow"/></svg></button>
                <button class="b"><svg class="g"><use href="#g-swap"/></svg></button>
            </div>
            <i class="hgrip"></i>
            <div class="stack s15">
                <button class="b dd"><svg class="g"><use href="#g-plate"/></svg></button>
                <button class="b"><svg class="g"><use href="#g-cyl"/></svg></button>
                <button class="b"><svg class="g"><use href="#g-dots"/></svg></button>
                <button class="b"><svg class="g"><use href="#g-pencil"/></svg></button>
                <button class="b dd"><svg class="g"><use href="#g-dots"/></svg></button>
                <button class="b"><svg class="g"><use href="#g-plate"/></svg></button>
                <button class="b dd"><svg class="g"><use href="#g-pipe"/></svg></button>
                <button class="b"><svg class="g"><use href="#g-cyl"/></svg></button>
                <button class="b dd"><svg class="g"><use href="#g-box"/></svg></button>
                <button class="b dd"><svg><use href="#refgeo"/></svg></button>
                <button class="b"><svg class="g"><use href="#g-pipe"/></svg></button>
                <button class="b"><svg class="g"><use href="#g-plate"/></svg></button>
                <button class="b"><svg class="g"><use href="#g-swap"/></svg></button>
                <button class="b"><svg class="g"><use href="#g-swap"/></svg></button>
                <button class="b"><svg class="g"><use href="#g-mir"/></svg></button>
            </div>
            <button class="b glyph more down">»</button>
        </nav>

        <aside class="panel">
            <div class="tabs">
                <button class="tab sel"><svg><use href="#part"/></svg></button>
                <button class="tab"><svg><use href="#props"/></svg></button>
                <button class="tab"><svg><use href="#config"/></svg></button>
                <button class="tab"><svg><use href="#dimx"/></svg></button>
                <button class="tab"><svg><use href="#disp"/></svg></button>
                <button class="b glyph more">»</button>
            </div>
            <label class="filter"><svg><use href="#funnel"/></svg><input type="text" aria-label="Filtro"></label>
            <ul class="tree">
                <li class="root"><svg><use href="#root"/></svg>modifiche3&nbsp; (Default&lt;&lt;Default&gt;_As</li>
                <li><svg><use href="#f-sens"/></svg>Sensori</li>
                <li class="plus"><svg><use href="#fold"/></svg><span class="stamp">A</span>Annotazioni</li>
                <li><svg><use href="#f-body"/></svg>Corpi solidi</li>
                <li><svg><use href="#fold"/></svg><span class="stamp">Σ</span>Equazioni</li>
                <li><svg><use href="#mat"/></svg>Acciaio al carbonio semplice</li>
                <li><svg><use href="#plane"/></svg>Piano frontale</li>
                <li><svg><use href="#plane"/></svg>Piano superiore</li>
                <li><svg><use href="#plane"/></svg>Piano destro</li>
                <li><svg><use href="#orig"/></svg>Origine</li>
                <li class="minus dim"><svg><use href="#feat"/></svg>Estrusione1</li>
                <li class="sub"><svg><use href="#skt"/></svg>Schizzo1</li>
                <li class="minus dim"><svg><use href="#feat"/></svg>Estrusione2</li>
                <li class="sub"><svg><use href="#skt"/></svg>Schizzo2</li>
                <li class="minus dim"><svg><use href="#featr"/></svg>Estrusione3</li>
                <li class="sub"><svg><use href="#sketch"/></svg>(-) Schizzo3</li>
                <li class="plus dim"><svg><use href="#feat"/></svg>Foro3</li>
                <li class="plus dim"><svg><use href="#feat"/></svg>Foro4</li>
                <li class="dim"><svg><use href="#axis"/></svg>Asse1</li>
                <li class="dim"><svg><use href="#axis"/></svg>Asse2</li>
                <li class="plus dim"><svg><use href="#feat"/></svg>Estrusione4</li>
                <li class="dim"><svg class="g"><use href="#g-mir"/></svg>Specchia2</li>
                <li class="dim"><svg><use href="#axis"/></svg>Asse3</li>
                <li class="plus dim"><svg><use href="#feat"/></svg>Foro7</li>
            </ul>
            <div class="blank"></div>
            <div class="hscroll"><button class="sb lt"></button><i class="thumb"></i><button class="sb rt"></button></div>
        </aside>

        <section class="stage">
            <div class="view">
                <svg class="model" viewBox="148 57 615 541">
                    <defs>
                        <linearGradient id="body" x1="0" y1="0" x2="0" y2="1"><stop offset="0" stop-color="#6f8a8c"/><stop offset=".6" stop-color="#6a8581"/><stop offset="1" stop-color="#7e9890"/></linearGradient>
                        <linearGradient id="bore" gradientUnits="userSpaceOnUse" x1="438" y1="275" x2="500" y2="315"><stop offset="0" stop-color="#718c8c"/><stop offset=".38" stop-color="#a5bcb8"/><stop offset=".7" stop-color="#829d98"/><stop offset="1" stop-color="#7d9892"/></linearGradient>
                    </defs>
                    <path d="M429 268l20-23C450 280 478 310 512 309c25-1 40-20 40-42l14 208-20 22-133-28z" fill="url(#body)"/>
                    <path d="M429 268l20-23C450 280 478 310 512 309c14 0 22-4 28-11l-7-8c-2 28-20 43-44 43-32 0-58-27-60-65z" fill="url(#bore)"/>
                    <path d="M533 290l19-22c0 13-3 23-12 31l-6 5z" fill="#7c9798"/>
                    <g fill="none" stroke="#d8e83a" stroke-width="1.200">
                        <path d="M429 268c2 38 28 65 60 65 24 0 42-15 44-43"/>
                        <path d="M429 268l-16 201 133 28-13-207 19-22M429 268l20-23M546 497l19-22"/>
                        <path d="M413 469l18-22" stroke-width=".5"/>
                    </g>
                    <g fill="none" stroke="#0c1418" stroke-width="1.500">
                        <path d="M448 246c2 34 30 64 63 63 25-1 41-20 41-42l13 208-134-28z"/>
                        <path d="M500.500 257v5M498 259.500h5" stroke-width="1"/>
                    </g>
                    <g fill="#0c1418"><circle cx="448.500" cy="245.500" r="1.800"/><circle cx="552" cy="267.500" r="1.800"/><circle cx="431" cy="446.500" r="1.800"/><circle cx="565" cy="475" r="1.800"/></g>
                    <g fill="none" stroke="#1c2850" stroke-width=".9">
                        <path d="M431 449v65M564.500 477v65M431 513l133.500 28M431 513l14 1-1 4zM564.500 541l-14-5 1 4z"/>
                    </g>
                    <text x="491" y="523" transform="rotate(11 491 523)" class="qty">72</text>
                    <path d="M497.500 488v-15M498 487.500h5" stroke="#e03020" fill="none"/><path d="M495 475l2.500-5 2.500 5zM496 486h3v3h-3zM502 485l5 2.500-5 2z" fill="#e03020"/>
                    <!-- triad -->
                    <path d="M173.500 563v-13" stroke="#0c7020" stroke-width="2"/><path d="M170 553l3.500-7 3.500 7z" fill="#0c8020"/>
                    <path d="M173 563l12 3" stroke="#b02030" stroke-width="2"/><path d="M183 562l8 5-9 2z" fill="#d02434"/>
                    <path d="M173 563l-5 5" stroke="#101c90" stroke-width="3"/><path d="M172 568l-7 4 1-8z" fill="#101c90"/>
                    <g class="ax"><text x="171" y="545" fill="#187840">Y</text><text x="190" y="570" fill="#c03454">X</text><text x="162" y="576" fill="#1828a0">Z</text></g>
                </svg>
                <div class="headsup">
                    <button class="b"><svg><use href="#zoomfit"/></svg></button>
                    <button class="b"><svg><use href="#zoomfit"/></svg></button>
                    <button class="b"><svg><use href="#brush"/></svg></button>
                    <button class="b"><svg class="lite"><use href="#rot"/></svg></button>
                    <button class="b"><svg><use href="#books"/></svg></button>
                    <button class="b dd"><svg><use href="#solid"/></svg></button>
                    <button class="b dd"><svg><use href="#iso2"/></svg></button>
                    <button class="b dd"><svg><use href="#weld"/></svg></button>
                    <button class="b dd"><svg><use href="#pie"/></svg></button>
                    <button class="b dd"><svg><use href="#props"/></svg></button>
                </div>
                <div class="mdi">
                    <button class="w min"></button>
                    <button class="w max"></button>
                    <button class="w cls">✕</button>
                </div>
                <svg class="confirm" viewBox="0 0 40 32"><path d="M13 3H5c-6 2-6 11 0 12M12 13v10M9 20l3 4 3-4M12 13c6-4 8 0 5 6" fill="none" stroke="#3c62e8" stroke-width="1.500"/><path d="M7 8l5-3" stroke="#5c94d8" stroke-width="2"/><path d="M26 18l12 11M38 17L25 30" stroke="#7058b4" stroke-width="2"/></svg>
                <div class="float">
                    <div class="ftitle"><b>Saldature</b><button title="Chiudi">✕</button></div>
                    <div class="fbody">
                        <button class="b"><svg class="g"><use href="#g-curve"/></svg></button>
                        <button class="b"><svg class="g"><use href="#g-rib"/></svg></button>
                        <button class="b"><svg class="g"><use href="#g-box"/></svg></button>
                        <button class="b"><svg class="g"><use href="#g-arrow"/></svg></button>
                        <button class="b"><svg class="g"><use href="#g-plate"/></svg></button>
                        <button class="b"><svg class="g"><use href="#g-cyl"/></svg></button>
                        <button class="b"><svg class="g"><use href="#g-fillet"/></svg></button>
                        <button class="b"><svg class="g"><use href="#g-angle"/></svg></button>
                        <button class="b"><svg class="g"><use href="#g-box"/></svg></button>
                        <button class="b"><svg class="g"><use href="#g-plate"/></svg></button>
                        <button class="b"><svg class="g"><use href="#g-fillet"/></svg></button>
                        <button class="b dd"><svg><use href="#refgeo"/></svg></button>
                    </div>
                </div>
                <button class="splitter" title="Pannello"><i></i><i></i><i></i></button>
                <div class="pane">
                    <button><svg><use href="#home"/></svg></button>
                    <button><svg><use href="#books"/></svg></button>
                    <button><svg><use href="#expl"/></svg></button>
                    <button><svg><use href="#redbox"/></svg></button>
                    <button class="lit"><svg><use href="#pal"/></svg></button>
                    <button><svg><use href="#pie"/></svg></button>
                    <button><svg><use href="#props"/></svg></button>
                </div>
            </div>
            <div class="vscroll"><button class="sb up"></button><button class="sb dn"></button></div>
            <div class="hscroll"><button class="sb lt"></button><button class="sb rt"></button></div>
        </section>

        <nav class="side right">
            <div class="tools">
                <i class="hgrip"></i>
                <div class="stack s3">
                    <button class="b dd on" title="Schizzo"><svg><use href="#sketch"/></svg></button>
                    <button class="b dd" title="Quota"><svg><use href="#dim"/></svg></button>
                    <button class="b"><svg class="g"><use href="#g-sk"/></svg></button>
                </div>
                <i class="hsep"></i>
                <div class="stack s27">
                    <button class="b dd" title="Linea"><svg><use href="#line"/></svg></button>
                    <button class="b dd" title="Rettangolo"><svg><use href="#rect"/></svg></button>
                    <button class="b dd" title="Asola"><svg><use href="#slot"/></svg></button>
                    <button class="b dd" title="Cerchio"><svg><use href="#circ"/></svg></button>
                    <button class="b dd" title="Arco"><svg><use href="#arc"/></svg></button>
                    <button class="b dd" title="Spline"><svg><use href="#spline"/></svg></button>
                    <button class="b dd" title="Ellisse"><svg><use href="#ell"/></svg></button>
                    <button class="b dd" title="Raccordo"><svg><use href="#filletc"/></svg></button>
                    <button class="b" title="Poligono"><svg><use href="#poly"/></svg></button>
                    <button class="b"><svg><use href="#balls"/></svg></button>
                    <button class="b" title="Punto"><svg><use href="#pt"/></svg></button>
                    <button class="b"><svg class="g"><use href="#g-dots"/></svg></button>
                    <button class="b" title="Testo"><svg><use href="#txt"/></svg></button>
                    <button class="b"><svg class="g"><use href="#g-sk"/></svg></button>
                    <button class="b dd" title="Accorcia"><svg><use href="#trim"/></svg></button>
                    <button class="b dd" title="Converti"><svg><use href="#conv"/></svg></button>
                    <button class="b" title="Offset"><svg><use href="#off"/></svg></button>
                    <button class="b" title="Specchia"><svg><use href="#mirr"/></svg></button>
                    <button class="b dd" title="Ripetizione"><svg><use href="#patt"/></svg></button>
                    <button class="b dd" title="Sposta"><svg><use href="#move"/></svg></button>
                    <button class="b dd" title="Relazioni"><svg><use href="#rel"/></svg></button>
                    <button class="b"><svg><use href="#fix"/></svg></button>
                    <button class="b dd"><svg><use href="#snap"/></svg></button>
                    <button class="b"><svg><use href="#rapid"/></svg></button>
                    <button class="b"><svg><use href="#conn"/></svg></button>
                    <button class="b"><svg class="g"><use href="#g-dots"/></svg></button>
                    <button class="b"><svg class="g"><use href="#g-dots"/></svg></button>
                </div>
            </div>
            <div class="under"></div>
        </nav>
    </main>

    <footer class="status">
        <span class="edition">SolidWorks Professional 2010</span>
        <span>41.12mm</span><span>176.04mm</span><span>0mm</span>
        <span class="cell first">Totalmente definito</span>
        <span class="cell">ModificaSchizzo3</span>
        <span class="cell ico"><svg><use href="#traffic"/></svg></span>
        <span class="cell ico"><svg><use href="#help"/></svg><span class="stamp q">?</span></span>
        <span class="cell ico last"><svg><use href="#tag"/></svg></span>
    </footer>
</div>

<div class="taskbar">
    <button class="start"><svg><use href="#win"/></svg>Start</button>
    <div class="quick">
        <svg><use href="#blueA"/></svg><svg><use href="#ie"/></svg><svg><use href="#srv"/></svg><svg><use href="#mail"/></svg><svg><use href="#expl"/></svg><svg><use href="#app"/></svg><svg><use href="#cc"/></svg><svg><use href="#bird"/></svg><svg><use href="#logo"/></svg>
    </div>
    <div class="tasks">
        <button class="task cur"><svg><use href="#logo"/></svg>Solid...</button>
        <button class="task"><svg><use href="#blueA"/></svg>aiuto p...</button>
        <button class="task"><svg><use href="#fold"/></svg>Pedan...</button>
        <button class="task"><svg><use href="#rar"/></svg>modific...</button>
        <button class="task"><svg><use href="#rar"/></svg>modific...</button>
        <button class="task"><svg><use href="#dog"/></svg>rel01....</button>
    </div>
    <div class="folder">Disegni <b>»</b></div>
    <label class="pcfind"><input type="text" placeholder="Cerca sul PC" aria-label="Cerca sul PC"><svg><use href="#glass"/></svg></label>
    <div class="tray">
        <svg><use href="#blueA"/></svg><svg><use href="#glass"/></svg><svg><use href="#pcs"/></svg><svg><use href="#vol"/></svg><svg><use href="#burst"/></svg><svg><use href="#green"/></svg><svg><use href="#chat"/></svg><svg><use href="#redsq"/></svg><svg><use href="#pcs"/></svg><svg><use href="#msn"/></svg><svg><use href="#nv"/></svg>
        <time>15:16</time>
    </div>
</div>
</body>
</html>
```
FILE: styles.css
```css
* {
    box-sizing: border-box;
}

body {
    margin: 0;
    height: 100vh;
    display: flex;
    flex-direction: column;
    font-family: Lato, "Liberation Sans", sans-serif;
    font-size: 7px;
    line-height: 10px;
    color: #16181f;
    background: #d6d2ca;
    overflow: hidden;
}

button, input, select {
    font: inherit;
    color: inherit;
    margin: 0;
    padding: 0;
    border: 0;
    background: none;
    border-radius: 0;
}

svg {
    width: 11px;
    height: 11px;
    flex: none;
    display: block;
}

.defs {
    position: absolute;
    width: 0;
    height: 0;
}

.g {
    fill: none;
    stroke: #9da2b0;
    stroke-width: 1.2;
}

.ink {
    fill: none;
    stroke: #252c88;
    stroke-width: 1.8;
}

.app {
    flex: 1;
    min-height: 0;
    display: flex;
    flex-direction: column;
}

/* toolbars */
.bar {
    display: flex;
    height: 19px;
    flex: none;
    background: linear-gradient(#eceff8, #dde0ed 50%, #c3c7d8);
    border-bottom: 1px solid #a6abbd;
}

.group {
    display: flex;
    align-items: center;
    justify-content: space-between;
    flex: none;
    padding: 0 5px 0 3px;
    border-right: 1px solid #9ea3b6;
}

.b {
    position: relative;
    width: 13px;
    height: 13px;
    flex: none;
    display: flex;
    align-items: center;
    padding: 0 1px;
}

.dd {
    width: 22px;
}

.dd::after {
    content: "";
    margin-left: auto;
    margin-right: 2px;
    border: 2px solid transparent;
    border-top-color: #343848;
    border-bottom: 0;
}

.dd:has(.g)::after {
    border-top-color: #8d92a4;
}

.on {
    background: linear-gradient(#c4c9da, #e4e7f0);
    outline: 1px solid #777d92;
    border-radius: 2px;
}

.grip {
    width: 3px;
    height: 13px;
    background: radial-gradient(circle at 1px 1px, #a2a7b8 1px, transparent 1px) 0 0 / 3px 3px;
}

.sep {
    width: 1px;
    height: 13px;
    background: #a0a5b6;
}

.glyph {
    justify-content: center;
    font-size: 10px;
    font-weight: 700;
    color: #4c5162;
}

.more {
    font-weight: 400;
    font-size: 11px;
}

.letter {
    justify-content: center;
    font: bold 11px "Liberation Serif", serif;
    color: #9398a8;
}

.blue {
    color: #2030a0;
    font-size: 13px;
}

/* small characters printed over an icon */
.stamp {
    position: absolute;
    left: 16px;
    font: bold 7px/7px "Liberation Serif", serif;
}

.abc {
    left: 0;
    top: 0;
    font: bold 5px/5px "Liberation Sans", sans-serif;
}

.big {
    left: 0;
    font-size: 11px;
    line-height: 11px;
    color: #24306c;
}

.big + svg {
    position: relative;
}

.g-file { width: 26.5%; padding: 0 2px 0 16px; border: 0; }
.g-win { width: 8.5%; padding: 0 5px 0 3px; border: 0; }
.g-sel { width: 13%; }
.g-view { width: 40.5%; }
.g-sheet { width: 42%; }
.g-line { width: 10.5%; }
.g-text { width: 51.5%; }
.g-note { width: 38%; }

.brand {
    width: 10%;
    display: flex;
    align-items: center;
    padding-left: 2px;
    font: 10px "DejaVu Sans", sans-serif;
    color: #2c2e36;
}

.brand svg {
    width: 14px;
    height: 14px;
    margin-right: 1px;
}

.flyout {
    width: 6px;
    background: #8288a4;
    display: flex;
    align-items: center;
    justify-content: center;
}

.flyout::after {
    content: "";
    border: 2px solid transparent;
    border-left-color: #20243a;
    border-right: 0;
}

.doc {
    flex: 1;
    margin: 0;
    align-self: center;
    text-align: center;
    font-size: 7px;
    font-weight: 400;
    color: #3c3f49;
}

.find {
    width: 15.5%;
    display: flex;
    align-items: center;
    height: 12px;
    margin-top: 3px;
    background: linear-gradient(#cdd2de, #fff 40%);
    border: 1px solid #9aa0b2;
    border-radius: 6px;
}

.find::after {
    content: "";
    order: 1;
    border: 2px solid transparent;
    border-top-color: #222;
    border-bottom: 0;
    margin-right: 2px;
}

.find input {
    order: 2;
    flex: 1;
    min-width: 0;
}

.w {
    position: relative;
    width: 9px;
    height: 8px;
    color: #5c6176;
    font-size: 9px;
    line-height: 8px;
}

.min::after {
    content: "";
    display: block;
    width: 5px;
    height: 2px;
    margin: 6px auto 0;
    background: currentColor;
}

.max::before, .max::after {
    content: "";
    position: absolute;
    width: 6px;
    height: 5px;
    border: 1px solid currentColor;
}

.max::before { right: 0; top: 0; border-left: 0; border-bottom: 0; }
.max::after { left: 0; bottom: 0; }

.combo {
    position: relative;
    height: 12px;
    background: #d5d0c8;
    border: 1px solid #8b8984;
    color: #807d78;
    flex: none;
}

.combo select {
    appearance: none;
    width: 100%;
    height: 10px;
    padding-left: 2px;
    display: block;
}

.combo::after {
    content: "";
    position: absolute;
    right: 2px;
    top: 4px;
    border: 2px solid transparent;
    border-top: 3px solid #75736e;
    border-bottom: 0;
    outline: 1px solid #9a9892;
    outline-offset: 2px;
    pointer-events: none;
}

.face {
    width: 102px;
    margin-left: 3px;
}

.size {
    width: 23px;
}

.height {
    width: 36px;
    height: 12px;
    margin-right: 4px;
    padding: 0 2px;
    background: #d5d0c8;
    border: 1px solid #8b8984;
    color: #807d78;
}

/* work area */
.work {
    flex: 1;
    min-height: 0;
    display: flex;
}

.side {
    width: 26px;
    flex: none;
    display: flex;
    flex-direction: column;
    background: linear-gradient(90deg, #e9ecf7, #dcdfec 50%, #b9bed3);
}

.stack {
    display: flex;
    flex-direction: column;
    justify-content: space-around;
    padding-left: 3px;
    min-height: 0;
}

.side .dd {
    width: 20px;
}

.side .dd::after {
    margin-right: 0;
    border-width: 2px 2px 0;
}

.s20 { flex: 287 0 0; }
.s15 { flex: 215 0 0; }
.s3 { flex: 43 0 0; }
.s27 { flex: 387 0 0; }

.hgrip {
    height: 3px;
    margin: 2px 3px 3px;
    background: radial-gradient(circle at 1px 1px, #a2a7b8 1px, transparent 1px) 0 0 / 3px 3px;
}

.hsep {
    height: 1px;
    background: #9fa4b6;
}

.down {
    margin: 10px 7px 3px;
    transform: rotate(90deg);
}

.right {
    width: 27px;
    background: #c9ccdb;
}

.tools {
    flex: 450 0 0;
    display: flex;
    flex-direction: column;
    background: linear-gradient(90deg, #e9ecf7, #dcdfec 50%, #b9bed3);
    border-bottom: 1px solid #969bb0;
}

.under {
    flex: 104 0 0;
}

/* feature manager */
.panel {
    width: 122px;
    flex: none;
    display: flex;
    flex-direction: column;
    background: #e1e5ee;
    border-right: 2px solid #6e7a90;
}

.tabs {
    display: flex;
    height: 17px;
    padding-top: 3px;
    background: #c4c9da;
}

.tab {
    width: 18px;
    display: flex;
    align-items: center;
    justify-content: center;
    background: #c0c4d2;
    border: 1px solid #9aa0b2;
    border-left: 0;
}

.sel {
    background: #f4f6fb;
    border-bottom: 0;
}

.tabs .more {
    margin-left: auto;
}

.filter {
    display: flex;
    align-items: center;
    height: 11px;
    padding-left: 3px;
    margin-right: 1px;
    background: #fff;
    border: 1px solid #959cb0;
    border-radius: 6px;
}

.filter svg {
    width: 9px;
    height: 9px;
}

.filter input {
    flex: 1;
    min-width: 0;
}

.tree {
    flex: 271 0 0;
    min-height: 0;
    margin: 0;
    padding: 2px 0 0;
    list-style: none;
    display: grid;
    grid-auto-rows: 1fr;
    border-bottom: 1px solid #8d93a2;
}

.tree li {
    position: relative;
    display: flex;
    align-items: center;
    gap: 2px;
    padding-left: 12px;
    white-space: nowrap;
    background: linear-gradient(#b4b8c2, #b4b8c2) 5px 0 / 1px 100% no-repeat,
        linear-gradient(#b4b8c2, #b4b8c2) 5px 50% / 6px 1px no-repeat;
}

.tree .root {
    padding-left: 0;
    background: none;
}

.tree .sub {
    padding-left: 23px;
    background: linear-gradient(#b4b8c2, #b4b8c2) 5px 0 / 1px 100% no-repeat,
        linear-gradient(#b4b8c2, #b4b8c2) 17px 0 / 1px 50% no-repeat,
        linear-gradient(#b4b8c2, #b4b8c2) 17px 50% / 5px 1px no-repeat;
}

.dim {
    color: #8d919c;
}

.plus::before, .minus::before {
    position: absolute;
    left: 3px;
    width: 5px;
    height: 5px;
    content: "";
    outline: 1px solid #a0a4b0;
    background: linear-gradient(#444, #444) 50% 50% / 3px 1px no-repeat, #f0f2f6;
}

.plus::before {
    background: linear-gradient(#222, #222) 50% 50% / 3px 1px no-repeat,
        linear-gradient(#222, #222) 50% 50% / 1px 3px no-repeat, #f0f2f6;
}

.blank {
    flex: 241 0 0;
}

/* scroll bars */
.hscroll {
    height: 10px;
    display: flex;
    background: #ebebe8;
    border-top: 1px solid #c8cad0;
}

.sb {
    width: 8px;
    flex: none;
    display: flex;
    align-items: center;
    justify-content: center;
    background: #dcdad4;
    border: 1px solid;
    border-color: #f4f4f0 #6c6c6c #6c6c6c #f4f4f0;
}

.sb::after {
    content: "";
    border: 2px solid transparent;
}

.lt::after { border-right: 3px solid #111; border-left: 0; }
.rt::after { border-left: 3px solid #111; border-right: 0; }
.up::after { border-bottom: 3px solid #666; border-top: 0; }
.dn::after { border-top: 3px solid #666; border-bottom: 0; }

.rt {
    margin-left: auto;
}

.thumb {
    width: 57px;
    background: #d5d3cd;
    border-right: 1px solid #555;
    border-left: 1px solid #888;
}

/* graphics area */
.stage {
    flex: 1;
    min-width: 0;
    display: grid;
    grid-template-columns: 1fr 10px;
    grid-template-rows: 1fr 10px;
    background: #ccd0de;
}

.stage .lt::after { border-right-color: #888; }
.stage .rt::after { border-left-color: #888; }

.view {
    position: relative;
    min-height: 0;
    background: linear-gradient(#2f70ee, #4685f6 30%, #6ea4f9 65%, #8cb9f5);
}

.vscroll {
    display: flex;
    flex-direction: column;
    justify-content: space-between;
    padding-top: 142px;
    background: #e9e9e6;
}

.vscroll .sb {
    width: 10px;
    height: 9px;
}

.model {
    position: absolute;
    inset: 0;
    width: 100%;
    height: 100%;
}

.qty {
    font: italic 11px "Open Sans", sans-serif;
    fill: #141c3c;
}

.ax {
    font: 7px "Open Sans", sans-serif;
}

.headsup {
    position: absolute;
    top: 2px;
    left: 0;
    right: 0;
    display: flex;
    justify-content: center;
    gap: 1px;
    padding-right: 4px;
    opacity: 0.75;
}

.headsup .b svg {
    width: 10px;
    height: 10px;
}

.headsup .lite {
    filter: brightness(1.5);
}

.headsup .dd {
    width: 20px;
}

.mdi {
    position: absolute;
    top: 4px;
    right: 6px;
    display: flex;
    gap: 6px;
}

.mdi .w {
    color: #a6bfee;
}

.confirm {
    position: absolute;
    top: 21px;
    right: 14px;
    width: 40px;
    height: 32px;
    opacity: 0.6;
}

.float {
    position: absolute;
    top: 26px;
    left: 33%;
    width: 193px;
    height: 33px;
    padding: 2px;
    background: #d9dce8;
    border: 1px solid;
    border-color: #eef0f8 #596078 #596078 #eef0f8;
}

.ftitle {
    display: flex;
    align-items: center;
    justify-content: space-between;
    height: 10px;
    padding: 0 1px 0 0;
    color: #fff;
    background: linear-gradient(90deg, #14306e, #aac8ee);
    font: 7px "DejaVu Sans", sans-serif;
}

.ftitle button {
    width: 7px;
    height: 7px;
    line-height: 5px;
    font-size: 6px;
    color: #222;
    background: #d8d4cc;
    border: 1px solid #76767a;
}

.fbody {
    display: flex;
    align-items: center;
    justify-content: space-between;
    height: 18px;
    padding: 0 3px;
    background: linear-gradient(#eff1f8, #cdd1df);
}

.splitter {
    position: absolute;
    left: -1px;
    top: 268px;
    width: 6px;
    height: 17px;
    padding: 2px 0 2px 2px;
    display: flex;
    flex-direction: column;
    justify-content: space-between;
    background: #edf0f6;
    border-radius: 0 2px 2px 0;
}

.splitter i {
    border: 1px solid transparent;
    border-right: 2px solid #222;
    width: 2px;
}

.pane {
    position: absolute;
    top: 37px;
    right: -10px;
    width: 15px;
    display: grid;
    z-index: 1;
}

.pane button {
    height: 15px;
    display: flex;
    align-items: center;
    justify-content: center;
    background: #c9cbd2;
    border: 1px solid #8c90a0;
    border-right: 0;
}

.pane .lit {
    background: #fff;
}

/* status bar */
.status {
    display: flex;
    align-items: center;
    height: 14px;
    flex: none;
    padding-left: 1px;
    gap: 10px;
    background: linear-gradient(90deg, #d8cfca, #d6d3d2 60%, #ced1dc);
    border-top: 1px solid #9a9ca4;
    border-bottom: 3px solid #8ea2bd;
}

.edition {
    flex: 1;
}

.cell {
    position: relative;
    margin-left: -6px;
    padding: 0 2px 0 1px;
    border-left: 1px solid #8e8e94;
    border-right: 1px solid #c0c0c6;
}

.first {
    margin-left: 0;
}

.ico {
    padding: 0 1px;
}

.ico svg {
    width: 10px;
    height: 10px;
}

.q {
    left: 4px;
    top: 2px;
    font-family: "Liberation Sans", sans-serif;
    color: #187858;
}

.last {
    padding: 0 9px 0 24px;
    border-right: 0;
}

/* desktop task bar */
.taskbar {
    display: flex;
    align-items: center;
    height: 17px;
    flex: none;
    padding: 1px;
    border-top: 1px solid #f2efe9;
    background: #d6d2ca;
}

.start, .task {
    height: 14px;
    display: flex;
    align-items: center;
    gap: 1px;
    padding: 0 1px;
    background: #d8d4cc;
    border: 1px solid;
    border-color: #f8f6f2 #6a6864 #6a6864 #f8f6f2;
    white-space: nowrap;
}

.start {
    width: 33px;
    flex: none;
    font-size: 8px;
    font-weight: 900;
}

.start svg {
    width: 10px;
}

.quick {
    width: 21.5%;
    flex: none;
    display: flex;
    gap: 2px;
    padding-left: 4px;
    margin-left: 4px;
    border-left: 1px solid #8f8c86;
    border-right: 1px solid #8f8c86;
}

.quick svg {
    width: 12px;
}

.tasks {
    width: 36%;
    flex: none;
    display: grid;
    grid-template-columns: repeat(6, 1fr);
    gap: 2px;
    padding: 0 4px 0 2px;
}

.task {
    gap: 2px;
    padding: 0 2px;
}

.cur {
    font-weight: 900;
    background: #ebe9e5;
    border-color: #55534f #f8f6f2 #f8f6f2 #55534f;
}

.folder {
    flex: none;
    display: flex;
    gap: 5px;
    padding: 1px 5px 1px 3px;
    margin-left: 3px;
    border-left: 1px solid #8f8c86;
    border-right: 1px solid #8f8c86;
}

.pcfind {
    flex: 1;
    min-width: 0;
    display: flex;
    align-items: center;
    gap: 3px;
    margin: 0 8px 0 2px;
    background: #d5e2f0;
}

.pcfind input {
    flex: 1;
    min-width: 0;
    height: 13px;
    padding-left: 3px;
    background: #fff;
}

.pcfind svg {
    width: 9px;
    margin-right: 2px;
}

.tray {
    flex: none;
    display: flex;
    align-items: center;
    height: 14px;
    padding: 0 5px 0 1px;
    border: 1px solid;
    border-color: #8f8c86 #f8f6f2 #f8f6f2 #8f8c86;
}

.tray time {
    margin-left: 4px;
}
```
